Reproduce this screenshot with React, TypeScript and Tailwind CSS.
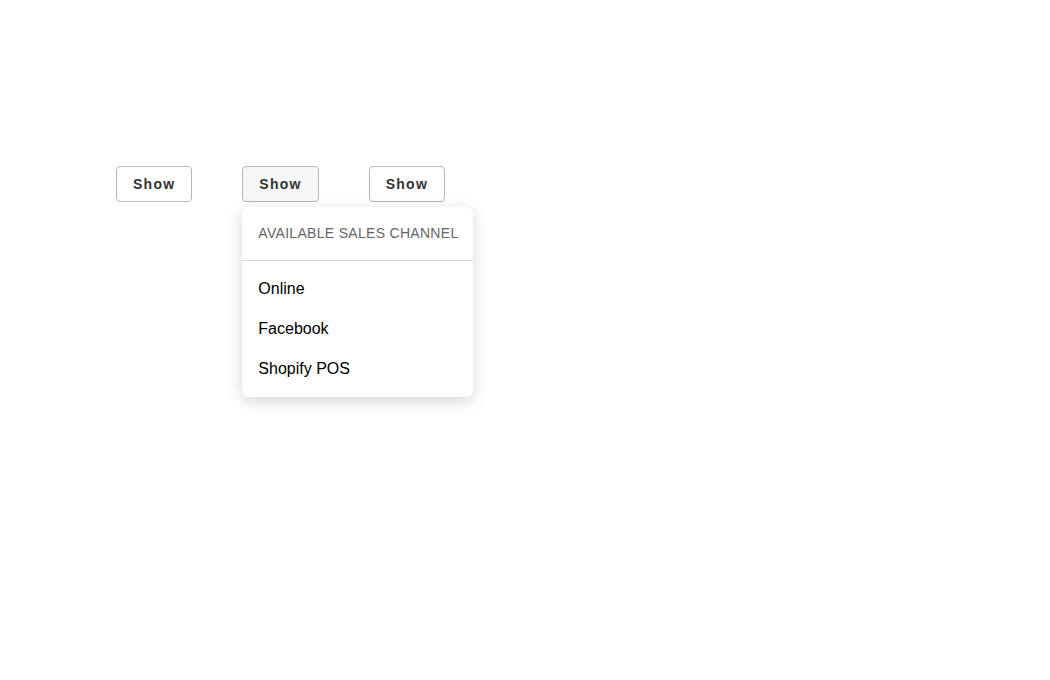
import { useState } from 'react'

const channels = ['Online', 'Facebook', 'Shopify POS']

function ShowButton({ active, onClick }: { active?: boolean; onClick?: () => void }) {
  return (
    <button
      onClick={onClick}
      className={`h-9 px-4 rounded border border-[#b5b5b5] text-[14px] font-bold tracking-[1.25px] text-[#333] ${
        active ? 'bg-[#f6f7f9]' : 'bg-white'
      }`}
    >
      Show
    </button>
  )
}

export default function App() {
  const [open, setOpen] = useState(1)

  return (
    <div className="min-h-[680px] bg-white font-['Liberation_Sans',Arial,sans-serif]">
      <div className="flex gap-[50px] pl-[116px] pt-[166px]">
        {[0, 1, 2].map((i) => (
          <div key={i} className="relative">
            <ShowButton active={open === i} onClick={() => setOpen(open === i ? -1 : i)} />
            {open === i && (
              <div className="absolute left-0 top-[41px] w-[231px] bg-white rounded-[7px] shadow-[0_4px_16px_rgba(0,0,0,0.16)] z-10">
                <div className="px-4 pt-4 pb-[17px] border-b border-[#d4d4d4] text-[14px] leading-5 tracking-[0.3px] text-[#666] whitespace-nowrap">
                  AVAILABLE SALES CHANNEL
                </div>
                <ul className="pt-2 pb-[8px]">
                  {channels.map((c) => (
                    <li key={c} className="h-10 flex items-center px-4 text-[16px] text-black">
                      {c}
                    </li>
                  ))}
                </ul>
              </div>
            )}
          </div>
        ))}
      </div>
    </div>
  )
}
